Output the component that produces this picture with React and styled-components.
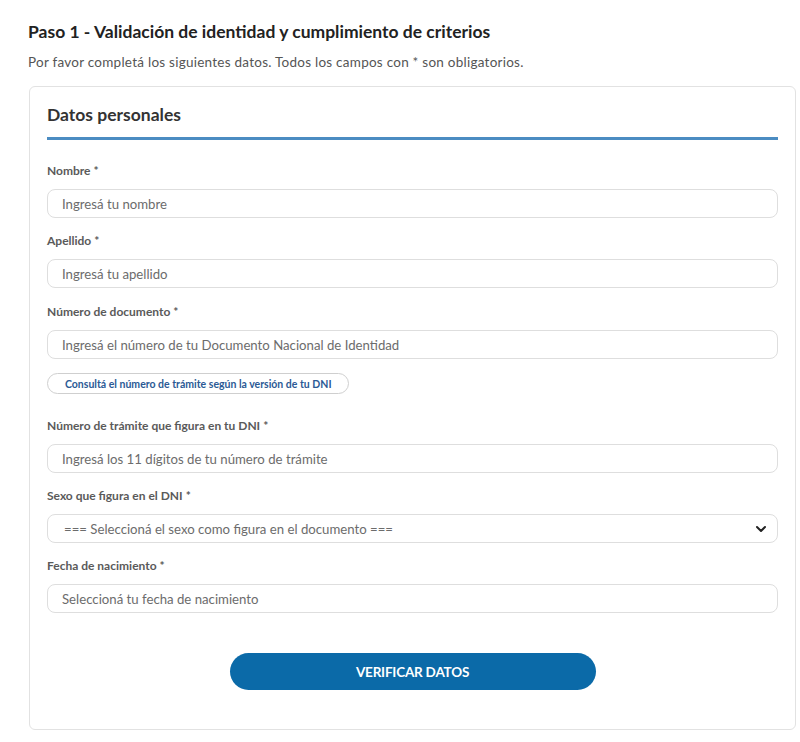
import React from "react";
import styled, { createGlobalStyle } from "styled-components";

const GlobalStyle = createGlobalStyle`
  html, body {
    margin: 0;
    padding: 0;
    background: #ffffff;
    font-family: Lato, "Noto Sans", sans-serif;
  }
  * { box-sizing: border-box; }
`;

const Page = styled.div`
  width: 800px;
  padding: 21px 4px 12px 28px;
`;

const Title = styled.h2`
  margin: 0;
  font-size: 17.5px;
  font-weight: 700;
  color: #222;
  line-height: 22px;
`;

const Intro = styled.p`
  margin: 10px 0 15px;
  font-size: 13.5px;
  letter-spacing: 0.25px;
  color: #555;
  line-height: 18px;
`;

const Card = styled.section`
  margin-left: 1px;
  border: 1px solid #e2e2e2;
  border-radius: 6px;
  padding: 16px 17px 39px 17px;
`;

const CardTitle = styled.h3`
  margin: 0;
  padding-bottom: 10px;
  font-size: 17.5px;
  font-weight: 700;
  color: #333;
  line-height: 24px;
  border-bottom: 3px solid #4b8cc2;
`;

const Fields = styled.div`
  display: flex;
  flex-direction: column;
  padding-top: 23px;
`;

const Field = styled.div`
  display: flex;
  flex-direction: column;
  margin-bottom: ${(p) => p.$gap || 15}px;
`;

const Label = styled.label`
  font-size: 12px;
  font-weight: 700;
  color: #5a5a5a;
  line-height: 16px;
  margin-bottom: 10px;
`;

const Input = styled.input`
  height: 29px;
  width: 100%;
  border: 1px solid #dedede;
  border-radius: 8px;
  padding: 0 14px;
  font-family: Lato, "Noto Sans", sans-serif;
  font-size: 13.2px;
  color: #333;
  background: #fff;
  outline: none;
  &::placeholder { color: #6c6c6c; }
`;

const Select = styled.div`
  height: 29px;
  border: 1px solid #dedede;
  border-radius: 8px;
  padding: 0 14px 0 16px;
  display: flex;
  align-items: center;
  justify-content: space-between;
  font-size: 13.2px;
  color: #6c6c6c;
`;

const Chevron = styled.svg`
  width: 12px;
  height: 12px;
  margin-right: -4px;
`;

const Pill = styled.button`
  align-self: flex-start;
  margin-top: 14px;
  height: 21px;
  padding: 0 16px 0 17px;
  border: 1.5px solid #cfcfcf;
  border-radius: 11px;
  background: #fff;
  font-family: Lato, "Noto Sans", sans-serif;
  font-size: 10.5px;
  font-weight: 700;
  color: #2b5a95;
`;

const Req = styled.span`
  margin-left: 3px;
`;

const Actions = styled.div`
  display: flex;
  justify-content: center;
  padding-top: 25px;
`;

const Submit = styled.button`
  width: 366px;
  height: 37px;
  border: none;
  border-radius: 19px;
  background: #0b6aa8;
  color: #fff;
  font-family: Lato, "Noto Sans", sans-serif;
  font-size: 13.5px;
  font-weight: 700;
  letter-spacing: -0.2px;
`;

export default function App() {
  return (
    <Page>
      <GlobalStyle />
      <Title>Paso 1 - Validación de identidad y cumplimiento de criterios</Title>
      <Intro>Por favor completá los siguientes datos. Todos los campos con * son obligatorios.</Intro>
      <Card>
        <CardTitle>Datos personales</CardTitle>
        <Fields>
          <Field>
            <Label>Nombre<Req>*</Req></Label>
            <Input placeholder="Ingresá tu nombre" />
          </Field>
          <Field $gap={16}>
            <Label>Apellido<Req>*</Req></Label>
            <Input placeholder="Ingresá tu apellido" />
          </Field>
          <Field $gap={24}>
            <Label>Número de documento<Req>*</Req></Label>
            <Input placeholder="Ingresá el número de tu Documento Nacional de Identidad" />
            <Pill type="button">Consultá el número de trámite según la versión de tu DNI</Pill>
          </Field>
          <Field>
            <Label>Número de trámite que figura en tu DNI<Req>*</Req></Label>
            <Input placeholder="Ingresá los 11 dígitos de tu número de trámite" />
          </Field>
          <Field>
            <Label>Sexo que figura en el DNI<Req>*</Req></Label>
            <Select>
              <span>=== Seleccioná el sexo como figura en el documento ===</span>
              <Chevron viewBox="0 0 12 12">
                <path d="M2 4 L6 8 L10 4" fill="none" stroke="#222" strokeWidth="2" strokeLinecap="round" strokeLinejoin="round" />
              </Chevron>
            </Select>
          </Field>
          <Field>
            <Label>Fecha de nacimiento<Req>*</Req></Label>
            <Input placeholder="Seleccioná tu fecha de nacimiento" />
          </Field>
        </Fields>
        <Actions>
          <Submit type="button">VERIFICAR DATOS</Submit>
        </Actions>
      </Card>
    </Page>
  );
}
